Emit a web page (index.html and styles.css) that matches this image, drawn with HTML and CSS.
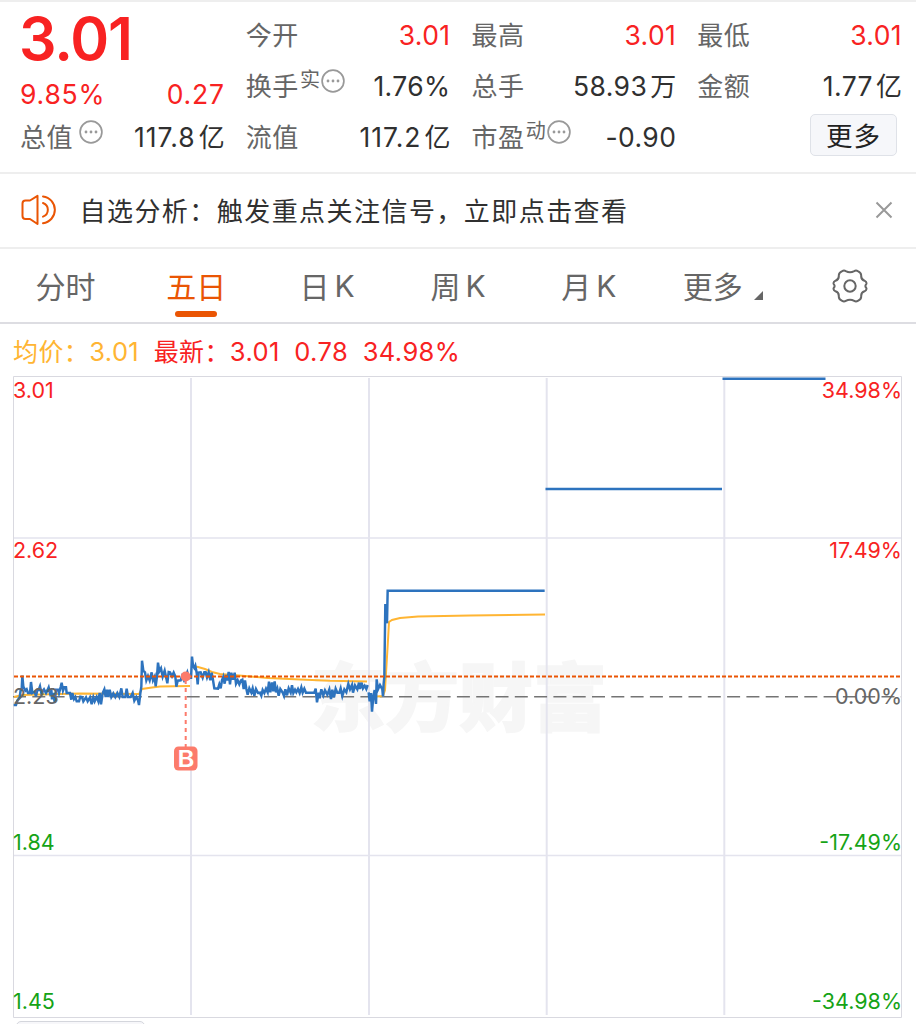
FILE: index.html
```
<!DOCTYPE html>
<html lang="zh-CN">
  <head>
    <meta charset="utf-8">
    <title>五日行情</title>
    <meta name="viewport" content="width=device-width, initial-scale=1.0">
    <link rel="stylesheet" href="styles.css">
  </head>
  <body>
    <main>

      <section class="summary">
        <div class="col col-price">
          <div class="price">3.01</div>
          <div class="row change up"><span>9.85%</span><span>0.27</span></div>
          <div class="row"><span class="label">总值<svg class="info gap" viewBox="0 0 24 24"><circle cx="12" cy="12" r="10.9"/><path d="M7 12h.01M12 12h.01M17 12h.01"/></svg></span><span class="wide">117.8<i>亿</i></span></div>
        </div>
        <div class="col">
          <div class="row"><span class="label">今开</span><span class="up">3.01</span></div>
          <div class="row"><span class="label">换手<sup>实</sup><svg class="info" viewBox="0 0 24 24"><circle cx="12" cy="12" r="10.9"/><path d="M7 12h.01M12 12h.01M17 12h.01"/></svg></span><span>1.76%</span></div>
          <div class="row"><span class="label">流值</span><span class="wide">117.2<i>亿</i></span></div>
        </div>
        <div class="col">
          <div class="row"><span class="label">最高</span><span class="up">3.01</span></div>
          <div class="row"><span class="label">总手</span><span>58.93<i>万</i></span></div>
          <div class="row"><span class="label">市盈<sup>动</sup><svg class="info" viewBox="0 0 24 24"><circle cx="12" cy="12" r="10.9"/><path d="M7 12h.01M12 12h.01M17 12h.01"/></svg></span><span>-0.90</span></div>
        </div>
        <div class="col">
          <div class="row"><span class="label">最低</span><span class="up">3.01</span></div>
          <div class="row"><span class="label">金额</span><span>1.77<i>亿</i></span></div>
          <div class="row row-more"><button class="more">更多</button></div>
        </div>
      </section>

      <section class="notice">
        <svg class="speaker" viewBox="0 0 36 32" width="36" height="32">
          <path d="M1.5 9.5 Q1.5 6.5 4.5 6.5 H9 L16.5 1.8 V30 L9 25 H4.5 Q1.5 25 1.5 22 Z"/>
          <path d="M22 2.4 A13.5 13.5 0 0 1 22 29.2"/>
          <path d="M22 9 A7.2 7.2 0 0 1 22 22.6"/>
        </svg>
        <p>自选分析：触发重点关注信号，立即点击查看</p>
        <svg class="close" viewBox="0 0 18 18" width="18" height="18"><path d="M1.5 1.5l15 15M16.5 1.5l-15 15"/></svg>
      </section>

      <nav class="tabs">
        <a>分时</a>
        <a class="active">五日</a>
        <a>日<b>K</b></a>
        <a>周<b>K</b></a>
        <a>月<b>K</b></a>
        <a class="tab-more">更多<svg viewBox="0 0 9 9" width="9" height="9"><path d="M9 0v9H0z"/></svg></a>
        <a class="tab-gear">
          <svg class="gear" viewBox="0 0 36 34" width="36" height="34">
            <path d="M10.2 2.1 Q12 1 13.8 2.1 Q18 4.5 22.2 2.1 Q24 1 25.8 2.1 Q29.3 3.8 29.2 6.5 Q28.9 10.6 32.5 11.7 Q34.9 12.8 34.4 14.8 Q32.4 17 34.4 19.2 Q34.9 21.2 32.5 22.3 Q28.9 23.4 29.2 27.5 Q29.3 30.2 25.8 31.9 Q24 33 22.2 31.9 Q18 29.5 13.8 31.9 Q12 33 10.2 31.9 Q6.7 30.2 6.8 27.5 Q7.1 23.4 3.5 22.3 Q1.1 21.2 1.6 19.2 Q3.6 17 1.6 14.8 Q1.1 12.8 3.5 11.7 Q7.1 10.6 6.8 6.5 Q6.7 3.8 10.2 2.1Z"/>
            <circle cx="18" cy="17" r="5.7"/>
          </svg>
        </a>
      </nav>

      <div class="legend">
        <span class="avg name">均价：</span><span class="avg num">3.01</span>
        <span class="last name">最新：</span><span class="last num">3.01</span><span class="last num">0.78</span><span class="last num">34.98%</span>
      </div>

      <svg class="chart" viewBox="0 376 916 644" width="916" height="644">
        <text class="watermark" x="311" y="725" textLength="296">东方财富</text>

        <g class="grid">
          <path d="M191 378V1015M369 378V1015M546.7 378V1015M724.3 378V1015"/>
          <path class="thin" d="M13 538H901M13 855.5H901"/>
          <path class="frame" d="M13.5 376.5H901.5V1017.5H13.5Z"/>
        </g>

        <path class="zero" d="M13 696.8H901"/>

        <g class="avg-line">
          <polyline points="14,697 22,695 40,694.5 80,693.5 139,694 142,689 152,687.5 160,686.5 190,686"/>
          <polyline points="192,666 198,667 205,669 212,672 220,674 245,676 268,678 300,679.5 330,680.8 367,681.5"/>
          <polyline points="370,697 383,696 385,690 388,640 389,622 392,620 400,618 418,616.5 470,615.5 545,614.5"/>
        </g>

        <!-- intraday ticks, three units per pixel -->
        <g class="price-line" transform="translate(0 640) scale(.33333)">
          <polyline points="41,195 48,195 52,182 59,172 62,150 65,150 67,107 70,140 76,152 80,148 84,159 90,159 93,126 97,159 104,155 108,169 112,150 116,150 120,139 124,159 132,148 138,159 143,149 146,142 150,159 154,149 156,178 160,159 164,186 168,149 174,149 177,160 182,141 185,128 189,152 193,142 198,142 200,159 210,159 214,179 217,159 222,177 226,171 230,184 237,184 241,170 246,171 250,184 258,172 263,184 270,172 275,193 280,172 284,184 290,171 295,184 299,159 303,193 308,159 313,148 317,171 321,149 325,171 329,149 334,171 340,160 346,171 352,159 358,171 364,145 368,171 376,171 380,146 384,171 392,171 398,159 403,182 409,171 414,181 417,195 421,160 424,140 426,62 430,92 435,97 439,121 444,108 449,121 455,97 459,121 464,110 467,139 471,109 474,68 478,94 483,85 488,110 494,92 498,110 502,130 506,96 510,97 516,109 521,98 526,110 529,140 533,122 542,121 546,109 552,121 558,108 562,97 568,118"/>
          <polyline points="573,117 576,50 579,77 583,84 586,77 590,98 593,133 596,98 602,97 608,113 613,97 617,97 621,112 626,97 631,121 635,98 639,120 643,145 654,146 658,133 662,145 666,121 670,110 674,131 678,105 682,121 686,96 690,133 694,98 699,119 704,98 708,131 713,121 718,133 723,121 727,119 731,147 735,121 739,146 743,164 748,145 754,158 758,145 763,167 768,147 774,159 780,158 784,167 788,150 793,159 798,146 803,157 807,125 811,157 816,127 820,154 824,124 828,157 832,146 836,167 841,147 848,158 852,168 856,148 861,166 866,145 872,158 876,136 880,159 885,149 889,157 894,147 899,159 904,142 908,158 913,146 918,158 943,158 947,146 951,187 956,158 959,175 964,148 970,166 975,151 982,164 988,148 993,177 997,149 1002,172 1007,146 1012,158 1018,158 1022,145 1027,168 1033,148 1039,157 1045,132 1050,148 1056,135 1059,158 1065,136 1072,148 1077,128 1080,147 1085,128 1089,145 1094,137 1099,147 1103,135"/>
          <polyline points="1106,157 1109,184 1113,159 1116,215 1120,170 1124,150 1128,192 1130,118 1134,148 1140,135 1147,148 1149,170 1151,130 1153,110 1156,-108 1161,-50 1163,-148 1634,-148"/>
        </g>
        <path class="flat-line" d="M545.5 489H722M722.5 378.7H825.5"/>

        <path class="latest" d="M14 676.5H901"/>
        <path class="buy-stem" d="M185.7 680V747"/>
        <circle class="buy-dot" cx="185.7" cy="676.5" r="5"/>
        <rect class="buy-box" x="174" y="746.5" width="23.5" height="24" rx="4.5"/>
        <text class="buy-text" x="177.5" y="767" textLength="17" lengthAdjust="spacingAndGlyphs">B</text>

        <g class="axis">
          <text class="up" x="13" y="398">3.01</text>
          <text class="up" x="13" y="557.5">2.62</text>
          <text class="flat" x="13" y="703.5">2.23</text>
          <text class="down" x="13" y="849.5">1.84</text>
          <text class="down" x="13" y="1009.3">1.45</text>
        </g>
        <g class="axis right">
          <text class="up" x="902" y="398">34.98%</text>
          <text class="up" x="902" y="557.5">17.49%</text>
          <text class="flat" x="902" y="703.5">0.00%</text>
          <text class="down" x="902" y="849.5">-17.49%</text>
          <text class="down" x="902" y="1009.3">-34.98%</text>
        </g>
      </svg>

      <div class="sheet-tab"></div>

    </main>
  </body>
</html>
```
FILE: styles.css
```
* {
  box-sizing: border-box;
}

body {
  margin: 0;
  background: #fff;
  color: #303030;
  font-family: Inter, "Noto Sans CJK SC", sans-serif;
  font-size: 26px;
}

main {
  width: 916px;
  height: 1024px;
  overflow: hidden;
}

svg {
  fill: none;
  flex: none;
}

.up {
  color: #f82222;
  fill: #f82222;
}

.down {
  fill: #16a316;
}

.flat {
  fill: #666;
}

/* quote summary */
.summary {
  display: grid;
  grid-template-columns: repeat(4, 1fr);
  gap: 21px;
  height: 174px;
  padding: 8px 14px 0 20px;
  border-top: 2px solid #eee;
  border-bottom: 2px solid #eee;
}

.row {
  display: flex;
  justify-content: space-between;
  align-items: center;
  height: 51px;
  font-size: 26.5px;
  letter-spacing: .4px;
  line-height: 51px;
  white-space: nowrap;
}

.row .wide {
  letter-spacing: 1px;
}

.row i {
  margin-left: 3px;
  font-size: 26px;
  font-style: normal;
  letter-spacing: 0;
}

.label {
  display: flex;
  align-items: center;
  color: #666;
  font-size: 26px;
  letter-spacing: .6px;
}

.label sup {
  margin-top: -14px;
  margin-left: 1px;
  font-size: 20px;
  letter-spacing: 0;
  line-height: 20px;
}

.info {
  width: 24px;
  height: 24px;
  margin: -11px 0 0 1px;
  stroke: #999;
  stroke-width: 1.7;
}

.info path {
  stroke-width: 2.8;
  stroke-linecap: round;
}

.info.gap {
  margin-left: 6px;
}

.price {
  height: 59px;
  margin-left: -1px;
  color: #f82222;
  font-size: 59px;
  font-weight: 600;
  letter-spacing: -1.1px;
  line-height: 57px;
}

.row.change {
  height: 43px;
  padding-top: 7px;
  letter-spacing: .8px;
}

.row-more {
  justify-content: flex-end;
}

.more {
  width: 87px;
  height: 42px;
  margin: -6px 5px 0 0;
  padding: 2px 0 0;
  border: 1.5px solid #dfe2e8;
  border-radius: 5px;
  background: #f6f7fa;
  color: #222;
  font: inherit;
  letter-spacing: 1px;
  line-height: 38px;
}

/* notice bar */
.notice {
  display: flex;
  align-items: center;
  height: 75px;
  padding: 0 23px 2px 21px;
  border-bottom: 2px solid #eee;
}

.notice p {
  flex: 1;
  margin: -1px 0 0 22.5px;
  letter-spacing: 1.45px;
}

.speaker {
  stroke: #ea5504;
  stroke-width: 2;
  stroke-linejoin: round;
  stroke-linecap: round;
}

.close {
  stroke: #999;
  stroke-width: 2;
}

/* period tabs */
.tabs {
  display: grid;
  grid-template-columns: repeat(7, 1fr);
  height: 75px;
  border-bottom: 2px solid #dddde2;
}

.tabs a {
  position: relative;
  display: flex;
  align-items: center;
  justify-content: center;
  padding-bottom: 2px;
  color: #666;
  font-size: 30px;
}

.tabs b {
  margin-top: 2px;
  margin-left: 5px;
  font-weight: 400;
}

.tabs .active {
  color: #ea5504;
}

.tabs .active::after {
  content: "";
  position: absolute;
  bottom: 5px;
  left: 50%;
  width: 42px;
  height: 6px;
  margin-left: -21px;
  border-radius: 3px;
  background: #ea5504;
}

.tab-more svg {
  margin: 21px 0 0 11px;
  fill: #666;
}

.tabs .tab-more {
  padding-left: 6px;
}

.tabs .tab-gear {
  padding: 0 2px 0 0;
}

.gear {
  margin-top: 1px;
  stroke: #666;
  stroke-width: 2;
}

/* chart */
.legend {
  display: flex;
  align-items: center;
  height: 52px;
  padding: 2px 0 0 13px;
  font-size: 25.5px;
  letter-spacing: .4px;
}

.name {
  margin-top: -3px;
  font-size: 25px;
}

.avg {
  color: #ffb533;
}

.last {
  color: #f82222;
}

.num {
  margin-right: 14.5px;
}

.chart {
  display: block;
}

.watermark {
  fill: #f6f6f6;
  stroke: #f6f6f6;
  stroke-width: 1.5;
  font-size: 74px;
  font-weight: 900;
}

.grid path {
  stroke: #e4e4ee;
  stroke-width: 2;
}

.grid .thin {
  stroke-width: 1.5;
}

.grid .frame {
  stroke: #d9d9e0;
  stroke-width: 1;
}

.zero {
  stroke: #747474;
  stroke-width: 1.5;
  stroke-dasharray: 13 6.3;
}

.avg-line {
  stroke: #ffb533;
  stroke-width: 2;
}

.price-line {
  stroke: #2d73be;
  stroke-width: 7.4;
}

.flat-line {
  stroke: #2d73be;
  stroke-width: 2.4;
}

.latest {
  stroke: #ea5504;
  stroke-width: 2;
  stroke-dasharray: 4 2;
}

.buy-stem {
  stroke: #fc7b6b;
  stroke-width: 2;
  stroke-dasharray: 4 4;
}

.buy-dot,
.buy-box {
  fill: #fc7b6b;
}

.buy-text {
  fill: #fff;
  font-size: 23px;
  font-weight: 600;
}

.axis {
  font-size: 21.5px;
}

.right {
  text-anchor: end;
}

.sheet-tab {
  width: 129px;
  height: 20px;
  margin: 1px 0 0 16px;
  border: 1.5px solid #d4d6dc;
  border-radius: 5px;
  background: #f7f7fa;
}
```
